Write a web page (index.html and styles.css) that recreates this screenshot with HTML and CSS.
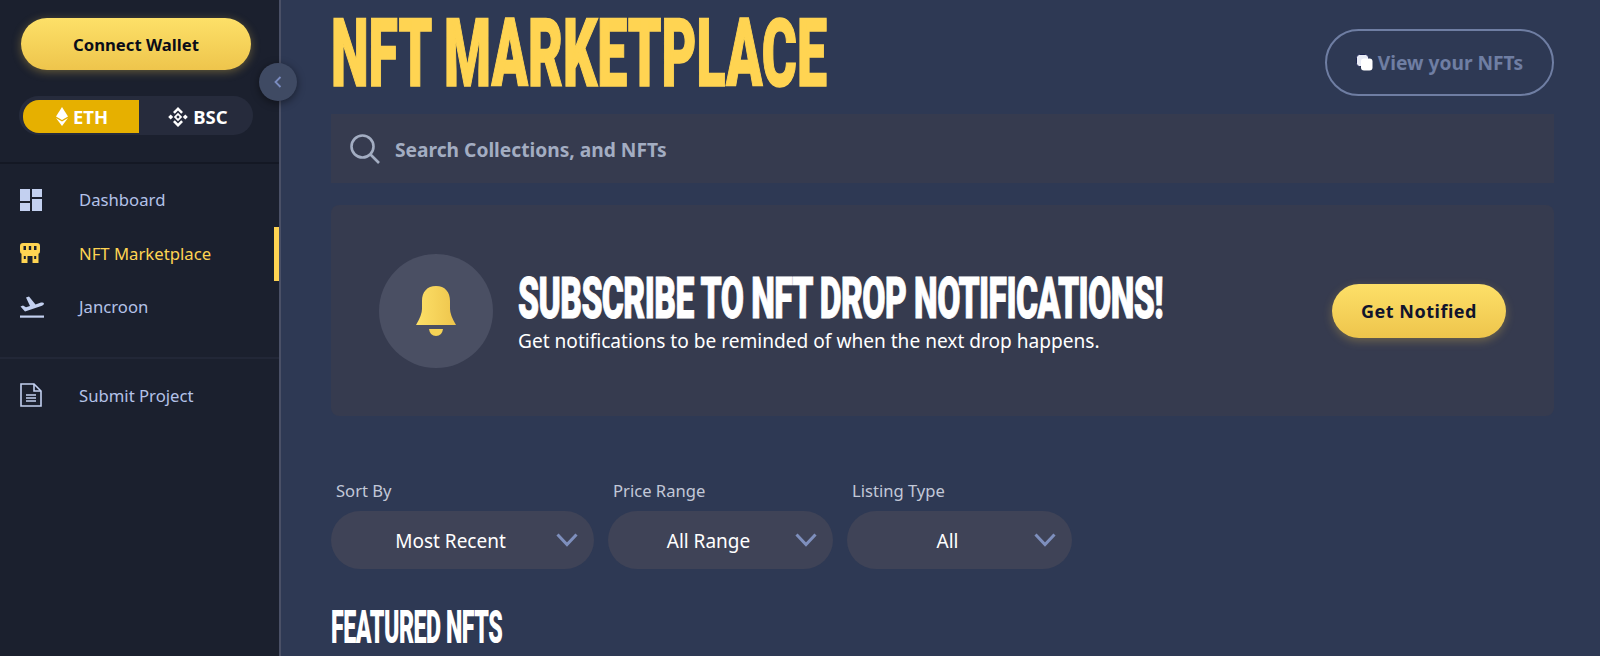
FILE: index.html
```html
<!DOCTYPE html>
<html lang="en">
<head>
    <meta charset="UTF-8">
    <meta name="viewport" content="width=device-width, initial-scale=1.0">
    <title>NFT Marketplace</title>
    <link rel="stylesheet" href="styles.css">
</head>
<body>
    <svg class="defs" width="0" height="0">
        <defs>
            <linearGradient id="bell-fill" x1="0" x2="1" y1="0" y2="0">
                <stop offset="0" stop-color="#fde068"/>
                <stop offset="1" stop-color="#eec54c"/>
            </linearGradient>
        </defs>
    </svg>
    <div class="page">
        <aside class="sidebar">
            <div class="sidebar-top">
                <button class="wallet-btn">Connect Wallet</button>
                <div class="chain-toggle">
                    <div class="chain chain-active">
                        <svg width="12" height="19" viewBox="0 0 12 19"><path fill="#fff" d="M6 0 12 9.600 6 13 0 9.600Z"/><path fill="#fff" d="M0 11 6 14.500 12 11 6 19Z"/></svg>
                        ETH
                    </div>
                    <div class="chain">
                        <svg width="20" height="20" viewBox="0 0 20 20" fill="#fff"><path d="M10 0 15 5 13.200 6.800 10 3.600 6.800 6.800 5 5Z"/><path d="M10 20 15 15 13.200 13.200 10 16.400 6.800 13.200 5 15Z"/><path d="M2.700 7.500 5.200 10 2.700 12.500 .2 10Z"/><path d="M17.300 7.500 19.800 10 17.300 12.500 14.800 10Z"/><path d="M10 5.800 14.200 10 10 14.200 5.800 10ZM10 8.300 8.300 10 10 11.700 11.700 10Z" fill-rule="evenodd"/></svg>
                        BSC
                    </div>
                </div>
            </div>
            <nav class="nav-group">
                <a class="nav-item">
                    <span class="nav-icon"><svg width="22" height="22" viewBox="0 0 22 22" fill="#c3d0f0"><rect width="10" height="12"/><rect x="12" width="10" height="8"/><rect y="14" width="10" height="8"/><rect x="12" y="10" width="10" height="12"/></svg></span>
                    Dashboard
                </a>
                <a class="nav-item nav-active">
                    <span class="nav-icon"><svg width="20" height="20" viewBox="0 0 20 20"><path fill="#ffd452" fill-rule="evenodd" d="M3 0H17Q20 0 20 3V8Q20 10.500 18.500 10.800V20H12.500V13H7.500V20H1.500V10.800Q0 10.500 0 8V3Q0 0 3 0ZM3.500 3V7H6V3ZM8.800 3V7H11.200V3ZM14 3V7H16.500V3ZM3.800 13V16H5.800V13ZM14.200 13V16H16.200V13Z"/></svg></span>
                    NFT Marketplace
                </a>
                <a class="nav-item">
                    <span class="nav-icon"><svg width="24" height="22" viewBox="0 0 24 22" fill="#c3d0f0"><rect y="19.500" width="24" height="2.200"/><path d="M.5 10.500 3 9.600 6 11.300 10 10 6 1.500 9 .5 15.500 8.400 21 6.600Q23.500 6 24 7.500 24 9 22 9.800L5 15.500Z"/></svg></span>
                    Jancroon
                </a>
            </nav>
            <nav class="nav-group nav-bottom">
                <a class="nav-item">
                    <span class="nav-icon"><svg width="22" height="24" viewBox="0 0 22 24" fill="none" stroke="#c3d0f0"><path stroke-width="1.600" d="M1 1H14L21 8V23H1Z"/><path stroke-width="1.600" d="M14 1V8H21"/><path stroke-width="1.600" d="M6 12H16M6 15H16M6 18H16"/></svg></span>
                    Submit Project
                </a>
            </nav>
            <button class="collapse-btn" aria-label="Collapse">
                <svg width="8" height="12" viewBox="0 0 8 12" fill="none" stroke="#7b8cc0" stroke-width="1.800"><path d="M6.500 1 1.500 6 6.500 11"/></svg>
            </button>
        </aside>

        <main class="content">
            <header class="top-row">
                <h1 class="title">NFT MARKETPLACE</h1>
                <button class="view-btn">
                    <svg width="17" height="17" viewBox="0 0 17 17"><rect x=".5" y=".5" width="12" height="12" rx="3" fill="#e8ebf5" stroke="#1c2450"/><rect x="5" y="4.500" width="11.500" height="12" rx="3" fill="#fff"/></svg>
                    View your NFTs
                </button>
            </header>

            <div class="search-bar">
                <svg width="30" height="30" viewBox="0 0 30 30" fill="none" stroke="#a3adc2" stroke-width="2.600"><circle cx="12.500" cy="12.500" r="11"/><path d="M20.500 20.500 29 29"/></svg>
                <span>Search Collections, and NFTs</span>
            </div>

            <section class="banner">
                <div class="bell-circle">
                    <svg width="40" height="50" viewBox="0 0 40 50"><path fill="url(#bell-fill)" d="M20 0C29 0 34 6 34 15V23Q34 29 40 39H0Q6 29 6 23V15C6 6 11 0 20 0Z"/><path fill="#f6d355" d="M13 43H27Q26 50 20 50 14 50 13 43Z"/></svg>
                </div>
                <div class="banner-text">
                    <h2 class="banner-title">SUBSCRIBE TO NFT DROP NOTIFICATIONS!</h2>
                    <p class="banner-sub">Get notifications to be reminded of when the next drop happens.</p>
                </div>
                <button class="notify-btn">Get Notified</button>
            </section>

            <div class="filters">
                <div class="filter filter-wide">
                    <label>Sort By</label>
                    <div class="select">
                        <span>Most Recent</span>
                        <svg width="22" height="14" viewBox="0 0 22 14" fill="none" stroke="#7e8fbd" stroke-width="3"><path d="M1.500 1.500 11 11.500 20.500 1.500"/></svg>
                    </div>
                </div>
                <div class="filter">
                    <label>Price Range</label>
                    <div class="select">
                        <span>All Range</span>
                        <svg width="22" height="14" viewBox="0 0 22 14" fill="none" stroke="#7e8fbd" stroke-width="3"><path d="M1.500 1.500 11 11.500 20.500 1.500"/></svg>
                    </div>
                </div>
                <div class="filter">
                    <label>Listing Type</label>
                    <div class="select">
                        <span>All</span>
                        <svg width="22" height="14" viewBox="0 0 22 14" fill="none" stroke="#7e8fbd" stroke-width="3"><path d="M1.500 1.500 11 11.500 20.500 1.500"/></svg>
                    </div>
                </div>
            </div>

            <h2 class="featured">FEATURED NFTS</h2>
        </main>
    </div>
</body>
</html>
```

FILE: styles.css
```css
html, body {
    margin: 0;
    padding: 0;
    height: 100%;
    overflow: hidden;
}

body {
    font-family: "Noto Sans", "Open Sans", sans-serif;
    background: #2e3954;
    color: #fff;
}

button {
    font-family: inherit;
    border: none;
    padding: 0;
}

.defs {
    position: absolute;
}

.page {
    display: flex;
    height: 656px;
}

/* sidebar */
.sidebar {
    position: relative;
    flex: 0 0 279px;
    background: #1b202e;
    border-right: 2px solid #4a5066;
}

.sidebar-top {
    height: 164px;
    padding: 18px 0 0 19px;
    box-sizing: border-box;
    border-bottom: 2px solid #141824;
}

.wallet-btn {
    display: block;
    width: 230px;
    height: 52px;
    margin-left: 2px;
    border-radius: 26px;
    background: linear-gradient(180deg, #fde068, #eec54c);
    box-shadow: 0 2px 10px rgba(238, 197, 76, 0.35);
    color: #0b0d18;
    font-size: 16.700px;
    font-weight: 700;
}

.chain-toggle {
    display: flex;
    width: 234px;
    height: 39px;
    margin-top: 26px;
    padding: 4px;
    box-sizing: border-box;
    border-radius: 20px;
    background: #262b3c;
    font-size: 18.500px;
    font-weight: 700;
}

.chain {
    flex: 0 0 116px;
    display: flex;
    align-items: center;
    justify-content: center;
    gap: 5px;
    height: 33px;
    padding-left: 2px;
    box-sizing: border-box;
}

.chain-active {
    background: #e6b000;
    border-radius: 16px 0 0 16px;
}

.nav-group {
    padding: 9px 0 23px;
    border-bottom: 2px solid #222737;
}

.nav-bottom {
    border-bottom: none;
    padding-top: 10px;
}

.nav-item {
    display: flex;
    align-items: center;
    position: relative;
    height: 53.500px;
    padding-left: 19px;
    color: #b4c2e8;
    font-size: 16.700px;
}

.nav-icon {
    flex: 0 0 60px;
    display: flex;
    align-items: center;
    padding-left: 1px;
    box-sizing: border-box;
}

.nav-active {
    color: #ffd452;
}

.nav-active::after {
    content: "";
    position: absolute;
    right: 0;
    top: 0;
    width: 5px;
    height: 54px;
    background: #ffd452;
}

.collapse-btn {
    position: absolute;
    left: 259px;
    top: 63px;
    z-index: 2;
    display: flex;
    align-items: center;
    justify-content: center;
    width: 38px;
    height: 38px;
    border-radius: 50%;
    background: #3f4a63;
    box-shadow: 0 2px 8px rgba(0, 0, 0, 0.45);
}

/* main column */
.content {
    flex: 1;
    min-width: 0;
    padding: 0 46px 0 50px;
}

.top-row {
    display: flex;
    align-items: flex-start;
    justify-content: space-between;
    height: 114px;
}

.title,
.banner-title,
.featured {
    margin: 0;
    font-family: Roboto, "Liberation Sans", sans-serif;
    font-weight: 900;
    white-space: nowrap;
    transform-origin: left top;
}

.title {
    width: 495px;
    margin-top: 9px;
    color: #ffd452;
    font-size: 94px;
    line-height: 90px;
    -webkit-text-stroke: 1.500px #ffd452;
    transform: scaleX(0.57);
}

.view-btn {
    display: flex;
    align-items: center;
    justify-content: center;
    gap: 5px;
    width: 229px;
    height: 67px;
    margin-top: 29px;
    box-sizing: border-box;
    border: 2px solid #6f7ea3;
    border-radius: 34px;
    background: transparent;
    color: #6f7ea3;
    font-size: 19.200px;
    font-weight: 700;
}

.search-bar {
    display: flex;
    align-items: center;
    gap: 15px;
    height: 69px;
    padding-left: 19px;
    background: #363b4f;
    color: #a3adc2;
    font-size: 19.200px;
    font-weight: 700;
}

.search-bar span {
    padding-top: 1px;
}

.banner {
    display: flex;
    align-items: center;
    height: 211px;
    margin-top: 22px;
    padding: 0 48px;
    box-sizing: border-box;
    background: #363b4f;
    border-radius: 8px;
}

.bell-circle {
    flex: 0 0 114px;
    display: flex;
    align-items: center;
    justify-content: center;
    height: 114px;
    border-radius: 50%;
    background: #4a4f63;
}

.banner-text {
    flex: 1;
    min-width: 0;
    margin-left: 25px;
}

.banner-title {
    font-size: 58px;
    line-height: 60px;
    letter-spacing: -1px;
    -webkit-text-stroke: 1px #fff;
    transform: scaleX(0.58);
}

.banner-sub {
    margin: 0;
    font-size: 19.100px;
    line-height: 26px;
}

.notify-btn {
    flex: 0 0 174px;
    height: 54px;
    border-radius: 27px;
    background: linear-gradient(180deg, #fde068, #eec54c);
    box-shadow: 0 3px 10px rgba(238, 197, 76, 0.3);
    color: #11142c;
    font-size: 18px;
    font-weight: 700;
    letter-spacing: 0.500px;
}

.filters {
    display: flex;
    gap: 14px;
    margin-top: 65px;
}

.filter {
    width: 225px;
}

.filter-wide {
    width: 263px;
}

.filter label {
    display: block;
    padding-left: 5px;
    color: #c2c8d8;
    font-size: 16.600px;
    line-height: 20px;
    margin-bottom: 10px;
}

.select {
    display: flex;
    align-items: center;
    height: 58px;
    padding: 0 16px 0 14px;
    background: #3f4357;
    border-radius: 29px;
    font-size: 19px;
}

.select span {
    flex: 1;
    padding-top: 1px;
    text-align: center;
}

.featured {
    margin-top: 37px;
    font-size: 47px;
    line-height: 42px;
    letter-spacing: -1px;
    transform: scaleX(0.495);
}
```
